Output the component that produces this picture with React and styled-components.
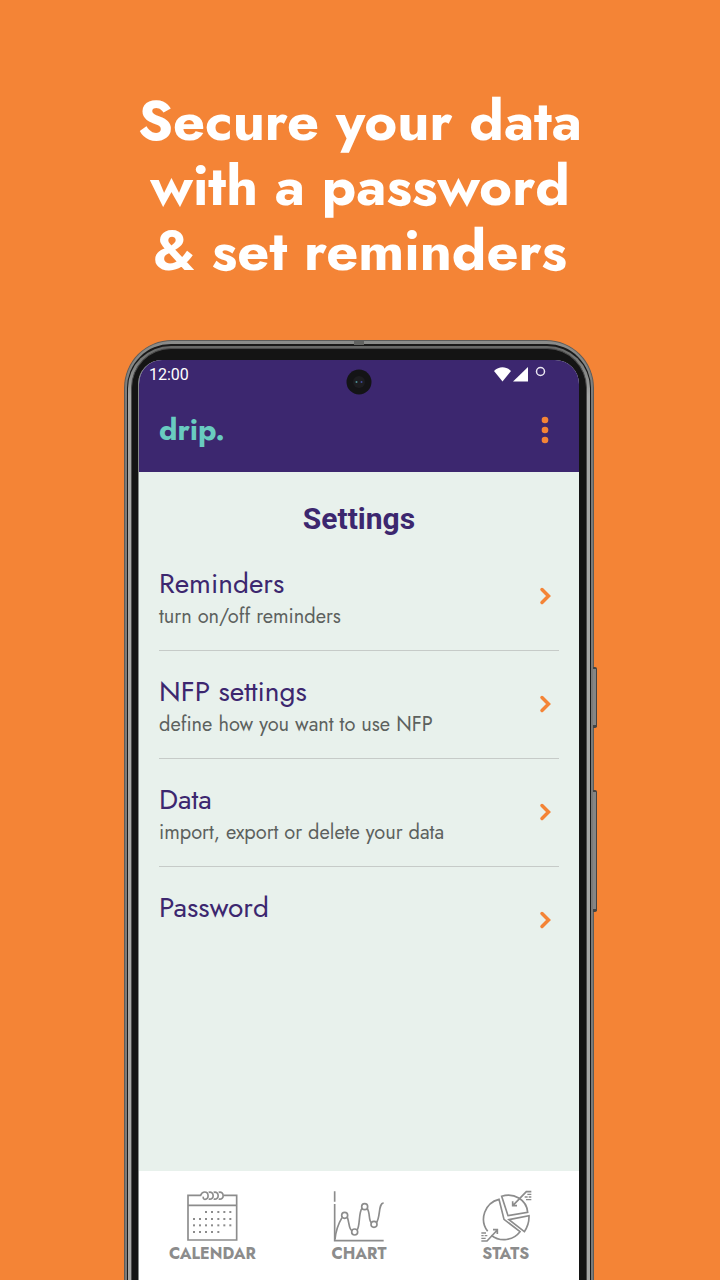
import React from "react";
import styled, { createGlobalStyle } from "styled-components";

const GlobalStyle = createGlobalStyle`
  *, *::before, *::after { box-sizing: border-box; }
  body { margin: 0; background: #f48436; }
  button { margin: 0; padding: 0; border: 0; background: none; font: inherit; color: inherit; cursor: pointer; }
`;

const display = `Jost, Lato, "Liberation Sans", sans-serif`;
const system = `Roboto, "Liberation Sans", sans-serif`;

const Page = styled.main`
  display: flex;
  flex-direction: column;
  align-items: center;
  min-height: 100vh;
  padding: 88px 24px 0;
  background: #f48436;
  font-family: ${display};
`;

const Headline = styled.h1`
  margin: 0 0 57px;
  color: #fff;
  font-size: 56px;
  font-weight: 700;
  line-height: 65px;
  text-align: center;
`;

const Phone = styled.div`
  position: relative;
  display: flex;
  flex: 1;
  flex-direction: column;
  width: 100%;
  max-width: 470px;
  margin-right: 2px;
  padding: 3px 2px 0;
  border: solid #5c5c5b;
  border-width: 1px 1px 0;
  border-radius: 48px 48px 0 0;
  background: linear-gradient(#8b8c8a, #7a7a79 60px);
`;

const Rim = styled.div`
  display: flex;
  flex: 1;
  flex-direction: column;
  padding: 2px 3px 0;
  border: solid #191919;
  border-width: 2px 1px 0;
  border-radius: 44px 44px 0 0;
  background: linear-gradient(#666766, #a5a6a5 50px);
`;

const Bezel = styled.div`
  display: flex;
  flex: 1;
  flex-direction: column;
  padding: 11px 7px 0 6px;
  border: solid #4b4b4b;
  border-width: 1px 1px 0;
  border-radius: 40px 40px 0 0;
  background: #141414;
`;

const Screen = styled.div`
  position: relative;
  display: flex;
  flex: 1;
  flex-direction: column;
  overflow: hidden;
  border-left: 1px solid #868a88;
  border-radius: 24px 24px 0 0;
  background: #e8f1ec;
`;

const SideKey = styled.span`
  position: absolute;
  top: ${(p) => p.$top}px;
  right: -4px;
  width: 4px;
  height: ${(p) => p.$height}px;
  border: solid #444;
  border-width: 2px 1px 3px 0;
  border-radius: 0 2px 2px 0;
  background: #858584;
`;

const Antenna = styled.span`
  position: absolute;
  top: 0;
  left: 50%;
  width: 10px;
  height: 4px;
  margin-left: -5px;
  background: #626361;
`;

const Camera = styled.svg`
  position: absolute;
  top: 9px;
  left: 50%;
  width: 26px;
  height: 26px;
  margin-left: -13px;
`;

const Header = styled.header`
  display: flex;
  flex-direction: column;
  height: 112px;
  background: #3c276f;
`;

const StatusBar = styled.div`
  display: flex;
  align-items: center;
  justify-content: space-between;
  height: 30px;
  padding: 0 31px 0 10px;
  color: #fff;
  font-family: ${system};
  font-size: 16px;
  line-height: 20px;
`;

const StatusIcons = styled.svg`
  width: 54px;
  height: 20px;
`;

const TitleBar = styled.div`
  display: flex;
  align-items: center;
  justify-content: space-between;
  height: 80px;
  padding: 0 24px 0 20px;
`;

const Brand = styled.a`
  color: #69cbc0;
  font-size: 30px;
  font-weight: 700;
  line-height: 40px;
  text-decoration: none;
`;

const MenuButton = styled.button`
  display: grid;
  place-items: center;
  width: 20px;
  height: 32px;
`;

const Content = styled.section`
  flex: 1;
  padding: 27px 20px 0;
`;

const Title = styled.h2`
  margin: 0 0 4px;
  color: #3c276f;
  font-family: ${system};
  font-size: 30px;
  font-weight: 700;
  line-height: 40px;
  text-align: center;
`;

const List = styled.ul`
  margin: 0;
  padding: 0;
  list-style: none;
`;

const Item = styled.li`
  height: 108px;
  border-bottom: 1px solid #c6cbc8;
  &:last-child { border-color: transparent; }
`;

const Row = styled.button`
  display: flex;
  align-items: center;
  justify-content: space-between;
  width: 100%;
  height: 100%;
  padding: 23px 5px 0 0;
  text-align: left;
`;

const RowText = styled.span`
  display: flex;
  flex-direction: column;
  align-self: flex-start;
`;

const RowTitle = styled.span`
  color: #3c276f;
  font-size: 28px;
  font-weight: 400;
  line-height: 36px;
`;

const RowNote = styled.span`
  color: #5c615e;
  font-size: 20px;
  font-weight: 400;
  line-height: 30px;
`;

const Chevron = styled.svg`
  width: 16px;
  height: 24px;
  margin-bottom: 24px;
`;

const Tabs = styled.nav`
  display: grid;
  grid-template-columns: repeat(3, 1fr);
  height: 109px;
  background: #fff;
`;

const Tab = styled.button`
  display: flex;
  flex-direction: column;
  align-items: center;
  padding-top: 19px;
  color: #8c8c8c;
  font-size: 16px;
  font-weight: 700;
  line-height: 24px;
`;

const TabIcon = styled.svg`
  width: 52px;
  height: 52px;
  fill: none;
  stroke: #8c8c8c;
  stroke-width: 5;
`;

const calendarDots = [
  [126, [198, 216, 235, 253, 271]],
  [147, [162, 180, 198, 216, 235, 253, 271]],
  [166, [162, 180, 198, 216, 235, 253, 271]],
  [186, [162, 180, 198, 216, 235]],
];

function CalendarIcon() {
  return (
    <TabIcon viewBox="138 60 156 156" aria-hidden="true">
      <path d="M184 76H144V210H290V76H251M144 106H290" />
      <path d="M182 76C184 70 188 66 194 66C207 66 208 88 195 88C190 88 189 84 190 80" />
      {[207, 222, 237].map((x) => (
        <path key={x} d={`M${x - 1} 67C${x + 17} 62 ${x + 17} 92 ${x - 1} 87`} />
      ))}
      {calendarDots.map(([y, xs]) =>
        xs.map((x) => <rect key={`${x}-${y}`} x={x - 3} y={y - 3} width="6" height="6" fill="#8c8c8c" stroke="none" />)
      )}
    </TabIcon>
  );
}

function ChartIcon() {
  return (
    <TabIcon viewBox="129 60 156 156" aria-hidden="true">
      <path d="M134 64V95M134 102V212H281" />
      <path d="M135 208C138 178 147 158 156 143M172 142C178 156 176 178 186 182M201 181C211 168 205 129 216 115M231 115C241 127 235 150 244 158M259 158C272 144 264 99 281 99" />
      <circle cx="164" cy="136" r="9" />
      <circle cx="194" cy="186" r="9" />
      <circle cx="224" cy="110" r="9" />
      <circle cx="252" cy="163" r="9" />
    </TabIcon>
  );
}

function StatsIcon() {
  return (
    <TabIcon viewBox="119 60 156 156" aria-hidden="true">
      <path d="M153 196A61 61 0 0 0 239 185L191 148L176 88A61 61 0 0 0 142 184" />
      <path d="M184 79C220 67 259 89 262 127L203 137Z" />
      <path d="M206 149L266 137Q267 163 252 185Z" />
      <path d="M273 65H258L218 106M217 94V107H230" />
      <path d="M123 213H140L171 180M158 179H171V192" />
      <path d="M261 73H273M253 81H262M265 81H273M257 89H273" strokeWidth="4" />
      <path d="M123 189H137M123 197H130M133 197H141M123 205H136" strokeWidth="4" />
    </TabIcon>
  );
}

const settings = [
  { title: "Reminders", note: "turn on/off reminders" },
  { title: "NFP settings", note: "define how you want to use NFP" },
  { title: "Data", note: "import, export or delete your data" },
  { title: "Password" },
];

const tabs = [
  { label: "CALENDAR", Icon: CalendarIcon },
  { label: "CHART", Icon: ChartIcon },
  { label: "STATS", Icon: StatsIcon },
];

export default function App() {
  return (
    <>
      <GlobalStyle />
      <Page>
        <Headline>
          Secure your data
          <br />
          with a password
          <br />& set reminders
        </Headline>
        <Phone>
          <Antenna />
          <SideKey $top={326} $height={61} />
          <SideKey $top={449} $height={122} />
          <Rim>
            <Bezel>
              <Screen>
                <Header>
                  <StatusBar>
                    <span>12:00</span>
                    <StatusIcons viewBox="0 0 54 20" aria-hidden="true">
                      <path d="M0 6C5 1 12 1 17 6L8.500 16.500Z" fill="#fff" />
                      <path d="M19 16.5L34 2V16.5Z" fill="#fff" />
                      <circle cx="46.5" cy="6.5" r="4" fill="none" stroke="#e9e5f1" strokeWidth="1.5" />
                    </StatusIcons>
                  </StatusBar>
                  <TitleBar>
                    <Brand href="#home">drip.</Brand>
                    <MenuButton type="button" aria-label="Menu">
                      <svg width="8" height="28" viewBox="0 0 8 28" fill="#f48436" aria-hidden="true">
                        <circle cx="4" cy="4" r="3.3" />
                        <circle cx="4" cy="14" r="3.3" />
                        <circle cx="4" cy="24" r="3.3" />
                      </svg>
                    </MenuButton>
                  </TitleBar>
                </Header>
                <Camera viewBox="0 0 26 26" aria-hidden="true">
                  <circle cx="13" cy="13" r="12.5" fill="#141416" />
                  <circle cx="13" cy="13" r="6" fill="#1d1d20" />
                  <circle cx="10.5" cy="13" r="1" fill="#4f9095" />
                  <circle cx="15.5" cy="13" r="1" fill="#3f4c99" />
                </Camera>
                <Content>
                  <Title>Settings</Title>
                  <List>
                    {settings.map(({ title, note }) => (
                      <Item key={title}>
                        <Row type="button">
                          <RowText>
                            <RowTitle>{title}</RowTitle>
                            {note && <RowNote>{note}</RowNote>}
                          </RowText>
                          <Chevron viewBox="0 0 16 24" aria-hidden="true">
                            <path
                              d="M4 5.5L10.5 12L4 18.5"
                              fill="none"
                              stroke="#f48436"
                              strokeWidth="3.5"
                              strokeLinecap="round"
                            />
                          </Chevron>
                        </Row>
                      </Item>
                    ))}
                  </List>
                </Content>
                <Tabs aria-label="Main">
                  {tabs.map(({ label, Icon }) => (
                    <Tab key={label} type="button">
                      <Icon />
                      {label}
                    </Tab>
                  ))}
                </Tabs>
              </Screen>
            </Bezel>
          </Rim>
        </Phone>
      </Page>
    </>
  );
}
